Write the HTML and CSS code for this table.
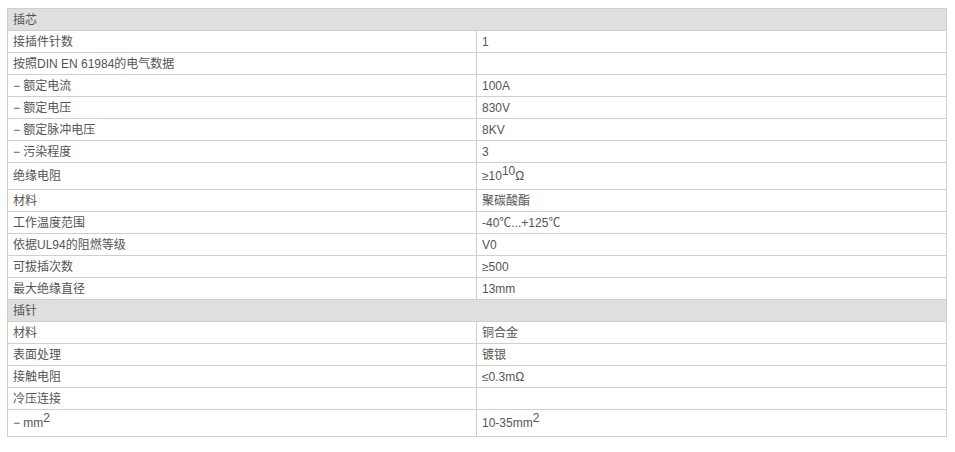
FILE: index.html
```html
<!DOCTYPE html>
<html lang="zh">
<head>
<meta charset="utf-8">
<link rel="stylesheet" href="styles.css">
</head>
<body>
<table class="spec">
  <colgroup><col class="c1"><col class="c2"></colgroup>
  <tr class="sec"><td colspan="2">插芯</td></tr>
  <tr><td>接插件针数</td><td>1</td></tr>
  <tr><td>按照DIN EN 61984的电气数据</td><td></td></tr>
  <tr><td>− 额定电流</td><td>100A</td></tr>
  <tr><td>− 额定电压</td><td>830V</td></tr>
  <tr><td>− 额定脉冲电压</td><td>8KV</td></tr>
  <tr><td>− 污染程度</td><td>3</td></tr>
  <tr class="tall"><td>绝缘电阻</td><td>≥10<sup>10</sup>Ω</td></tr>
  <tr><td>材料</td><td>聚碳酸酯</td></tr>
  <tr><td>工作温度范围</td><td>-40℃...+125℃</td></tr>
  <tr><td>依据UL94的阻燃等级</td><td>V0</td></tr>
  <tr><td>可拔插次数</td><td>≥500</td></tr>
  <tr><td>最大绝缘直径</td><td>13mm</td></tr>
  <tr class="sec"><td colspan="2">插针</td></tr>
  <tr><td>材料</td><td>铜合金</td></tr>
  <tr><td>表面处理</td><td>镀银</td></tr>
  <tr><td>接触电阻</td><td>≤0.3mΩ</td></tr>
  <tr><td>冷压连接</td><td></td></tr>
  <tr class="tall"><td>− mm<sup>2</sup></td><td>10-35mm<sup>2</sup></td></tr>
</table>
</body>
</html>
```
FILE: styles.css
```css
html, body { background: #fff; }
body {
  margin: 8px 0 0 7px;
  font-family: Arial, "Liberation Sans", "Noto Sans CJK SC", sans-serif;
  font-size: 12px;
  color: #555;
}
.spec {
  border-collapse: collapse;
  width: 940px;
  table-layout: fixed;
}
.c1 { width: 469px; }
.spec td {
  border: 1px solid #cfcfcf;
  height: 20px;
  padding: 1px 5px 0;
  line-height: 20px;
  vertical-align: middle;
  white-space: nowrap;
}
.spec .sec td {
  background: #dfdfdf;
  color: #555;
}
.spec .tall td {
  height: 25px;
  line-height: 25px;
}
.spec sup {
  font-size: 12px;
  line-height: 0;
  vertical-align: 5px;
}
```
